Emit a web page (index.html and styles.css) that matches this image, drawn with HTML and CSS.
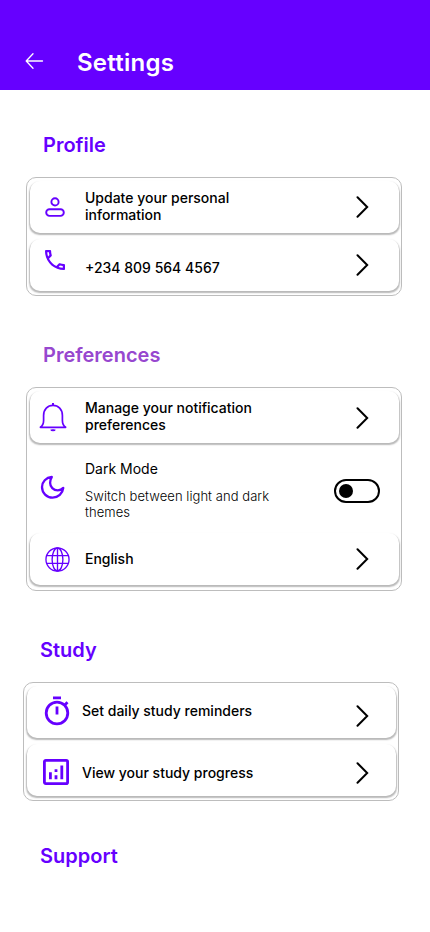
FILE: index.html
```html
<!DOCTYPE html>
<html lang="en">
<head>
<meta charset="utf-8">
<meta name="viewport" content="width=device-width, initial-scale=1">
<title>Settings</title>
<link rel="stylesheet" href="styles.css">
</head>
<body>
<svg class="defs" aria-hidden="true"><symbol id="chevron" viewBox="0 0 14 22"><path d="M1.5 1.2 L11.2 11 L1.5 20.8" fill="none" stroke="#000" stroke-width="2" stroke-linecap="round"/></symbol></svg>
<header class="header">
  <svg class="back" width="20" height="18" viewBox="0 0 20 18" fill="none" stroke="#fff" stroke-width="1.3" stroke-linecap="round" stroke-linejoin="round"><path d="M17.5 9H1.5M8 1.8 1.2 9 8 16.2"/></svg>
  <h1 class="title">Settings</h1>
</header>
<main class="content">
  <section class="group">
    <h2 class="heading">Profile</h2>
    <div class="card">
      <a class="row">
        <span class="icon"><svg class="user" width="20" height="20" viewBox="0 0 20 20" fill="none" stroke="#60f" stroke-width="1.9"><circle cx="10" cy="4.9" r="3.6"/><rect x="1.2" y="12.3" width="17.6" height="6.6" rx="3.3"/></svg></span>
        <span class="label">Update your personal information</span>
        <svg class="chevron"><use href="#chevron"/></svg>
      </a>
      <a class="row phone-row">
        <span class="icon"><svg class="phone" width="20" height="20" viewBox="3 3 18 18" fill="#60f"><path d="M6.54 5c.06.89.21 1.76.45 2.59l-1.2 1.2c-.41-1.2-.67-2.47-.76-3.79h1.51m9.86 12.02c.85.24 1.72.39 2.6.45v1.49c-1.32-.09-2.59-.35-3.8-.75l1.2-1.19M7.5 3H4c-.55 0-1 .45-1 1 0 9.39 7.61 17 17 17 .55 0 1-.45 1-1v-3.49c0-.55-.45-1-1-1-1.24 0-2.45-.2-3.57-.57-.1-.04-.21-.05-.31-.05-.26 0-.51.1-.71.29l-2.2 2.2c-2.83-1.45-5.15-3.76-6.59-6.59l2.2-2.2c.28-.28.36-.67.25-1.02C8.7 6.45 8.5 5.25 8.5 4c0-.55-.45-1-1-1z"/></svg></span>
        <span class="label">+234 809 564 4567</span>
        <svg class="chevron"><use href="#chevron"/></svg>
      </a>
    </div>
  </section>
  <section class="group preferences">
    <h2 class="heading">Preferences</h2>
    <div class="card">
      <a class="row">
        <span class="icon"><svg class="bell" width="28" height="30" viewBox="0 0 28 30" fill="none" stroke="#60f" stroke-width="1.7" stroke-linejoin="round"><path d="M1.4 25.3h25.2c-2.5-1.8-3.2-3.5-3.2-6.8v-5.1c0-6-4-10-9.4-10s-9.4 4-9.4 10v5.1c0 3.3-.7 5-3.2 6.8z"/><path d="M14 1v2.5M12.2 27.5c.2 1.1 3.4 1.1 3.6 0" stroke-width="2"/></svg></span>
        <span class="label">Manage your notification preferences</span>
        <svg class="chevron chevron-low"><use href="#chevron"/></svg>
      </a>
      <div class="mode">
        <span class="icon"><svg class="moon" width="26" height="25" viewBox="0 0 26 25" fill="none" stroke="#60f" stroke-width="2.3" stroke-linejoin="round"><path d="M11.8 2C6.1 2.4 2 6.8 2 12.1 2 18 6.8 22.7 12.6 22.7c5.5 0 10.1-4.1 10.7-9.8-1.5 1.6-3.4 2.4-5.5 2.4-4.4 0-7.7-3.4-7.7-7.6 0-2.2.6-4.1 1.7-5.7z"/></svg></span>
        <div class="mode-text">
          <span class="mode-name">Dark Mode</span>
          <span class="mode-note">Switch between light and dark themes</span>
        </div>
        <span class="toggle"><span class="knob"></span></span>
      </div>
      <a class="row language">
        <span class="icon"><svg class="globe" width="25" height="25" viewBox="0 0 26 26" fill="none" stroke="#60f" stroke-width="1.4"><circle cx="13" cy="13" r="12"/><ellipse cx="13" cy="13" rx="5.6" ry="12"/><path d="M2 9h22M2 17h22M13 1v24"/></svg></span>
        <span class="label">English</span>
        <svg class="chevron"><use href="#chevron"/></svg>
      </a>
    </div>
  </section>
  <section class="group study">
    <h2 class="heading">Study</h2>
    <div class="card">
      <a class="row reminders">
        <span class="icon"><svg class="timer" width="26" height="30" viewBox="0 0 26 30" fill="none" stroke="#60f" stroke-width="2.8"><circle cx="13" cy="17" r="10.8"/><path d="M9 1.9h8M13 10.5v8M20.3 9.4l3.2-3.2"/></svg></span>
        <span class="label">Set daily study reminders</span>
        <svg class="chevron"><use href="#chevron"/></svg>
      </a>
      <a class="row progress">
        <span class="icon"><svg class="chart" width="26" height="26" viewBox="0 0 26 26" fill="none" stroke="#60f" stroke-width="2.8"><rect x="1.4" y="1.4" width="23.2" height="23.2" rx="1.4"/><path d="M7.4 13.2v7M13 16.3v3.9M13 10.2v2.8M18.8 6.5v13.7"/></svg></span>
        <span class="label">View your study progress</span>
        <svg class="chevron"><use href="#chevron"/></svg>
      </a>
    </div>
  </section>
  <section class="group support">
    <h2 class="heading">Support</h2>
  </section>
</main>
</body>
</html>
```
FILE: styles.css
```css
* { box-sizing: border-box; }
body {
  margin: 0;
  min-height: 932px;
  background: #fff;
  color: #000;
  font-family: Inter, "Liberation Sans", sans-serif;
}
svg { display: block; flex: none; }
.defs { display: none; }
.header {
  height: 90px;
  padding: 48px 25px 0;
  display: flex;
  gap: 32px;
  background: #60f;
}
.back { margin-top: 4px; }
.title {
  margin: 0;
  color: #fff;
  font-size: 24px;
  font-weight: 600;
  line-height: 29px;
  letter-spacing: .25px;
}
.content { padding: 43px 28px 0 26px; }
.group { margin-bottom: 47px; }
.heading {
  margin: 0 0 20px 17px;
  color: #60f;
  font-size: 20px;
  font-weight: 600;
  line-height: 24px;
}
.preferences .heading { color: #9747cf; }
.card {
  height: 119px;
  padding: 3px 2px 2px 3px;
  border: 1px solid #bdbdbd;
  border-radius: 10px;
}
.row {
  height: 52px;
  padding-right: 29px;
  display: flex;
  align-items: center;
  background: #fff;
  border-radius: 10px;
  box-shadow: 0 1.5px 1.5px .5px rgba(0, 0, 0, .28);
}
.row + .row { margin-top: 6px; }
.icon {
  width: 55px;
  flex: none;
}
.label {
  flex: 1;
  padding: 0 84px 2px 0;
  font-size: 14px;
  font-weight: 500;
  line-height: 17px;
}
.chevron { width: 14px; height: 22px; }
.user { margin-left: 15px; }
.phone { margin: -10px 0 0 15px; }
.phone-row .label { padding-top: 4px; padding-bottom: 0; }
.bell { margin-left: 9px; }
.chevron-low { margin-top: 1px; }
.preferences .card { height: 204px; }
.mode {
  height: 90px;
  padding-right: 19px;
  display: flex;
  align-items: center;
}
.moon { margin: -1px 0 0 10px; }
.mode-text {
  flex: 1;
  padding-top: 4px;
  display: flex;
  flex-direction: column;
  gap: 11px;
}
.mode-name { font-size: 14px; line-height: 17px; }
.mode-note {
  width: 200px;
  font-size: 13px;
  font-weight: 300;
  line-height: 16px;
  letter-spacing: .06px;
}
.toggle {
  width: 46px;
  height: 24px;
  padding: 3px;
  margin-top: 5px;
  border: 2px solid #000;
  border-radius: 12px;
}
.knob {
  width: 14px;
  height: 14px;
  display: block;
  border-radius: 50%;
  background: #000;
}
.globe { margin-left: 15px; }
.study { margin: 0 3px 43px -3px; }
.timer { margin: -3px 0 0 17px; }
.chart { margin: 3px 0 0 16px; }
.study .row { padding-right: 26px; }
.reminders .label { padding-bottom: 4px; }
.reminders .chevron { margin-top: 7px; }
.progress .label { padding-top: 5px; padding-bottom: 0; }
.progress .chevron { margin-top: 5px; }
.support { margin: 0 0 0 -3px; }
```
